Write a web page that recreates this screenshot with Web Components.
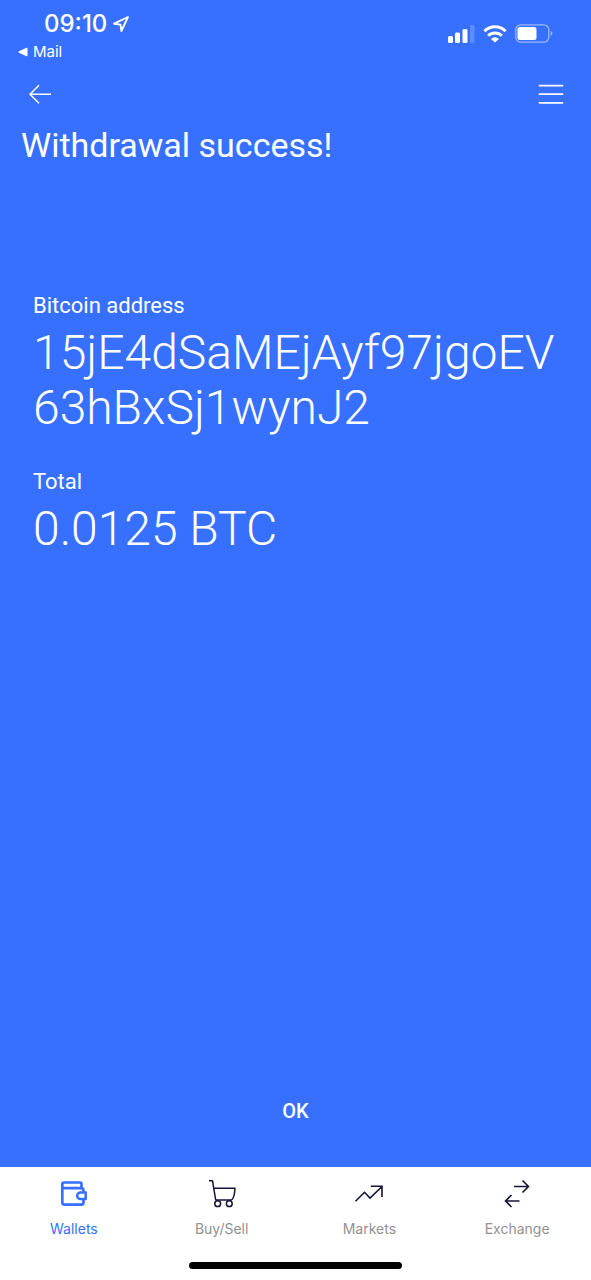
<!DOCTYPE html>
<html lang="en">
<head>
<meta charset="utf-8">
<meta name="viewport" content="width=device-width, initial-scale=1">
<title>Withdrawal success</title>
<style>
  body { margin: 0; background: #3770ff; }
</style>
</head>
<body>
<wallet-app></wallet-app>

<script>
const define = (name, html) => {
  const template = document.createElement('template');
  template.innerHTML = html;
  customElements.define(name, class extends HTMLElement {
    constructor() {
      super();
      this.attachShadow({ mode: 'open' }).append(template.content.cloneNode(true));
    }
  });
};

define('status-bar', `
<style>
  :host { display: flex; justify-content: space-between; align-items: flex-start; padding: 10px 38px 0 17px; font-family: Inter, sans-serif; color: #fff; }
  svg { display: block; }
  .time { display: flex; align-items: center; gap: 5px; padding-left: 27px; font-size: 24px; line-height: 28px; font-weight: 500; }
  .back { display: flex; align-items: center; gap: 5px; color: inherit; text-decoration: none; font-size: 15px; line-height: 20px; padding-top: 4px; }
  .signals { display: flex; align-items: center; gap: 8px; padding-top: 14px; }
</style>
<div>
  <div class="time"><span>09:10</span>
    <svg width="18" height="18" viewBox="0 0 18 18" fill="none" stroke="#fff" stroke-width="1.9" stroke-linejoin="round"><path d="M16 2 2 8.7l6.5.9.9 6.4z"/></svg>
  </div>
  <a class="back" href="#mail"><svg width="11" height="10" viewBox="0 0 11 10" fill="#fff"><path d="M2 4.200 9.500.8q1-.4 1 .7v7q0 1.100-1 .7L2 5.800q-1.600-.8 0-1.600z"/></svg>Mail</a>
</div>
<div class="signals">
  <svg width="27" height="18" viewBox="0 0 27 18" fill="#fff"><rect y="11" width="5" height="7" rx="1.500"/><rect x="7" y="7.500" width="5" height="10.500" rx="1.500"/><rect x="14.500" y="4" width="5" height="14" rx="1.500"/><rect x="22" y="0" width="4.500" height="18" rx="1.500" opacity=".2"/></svg>
  <svg width="24" height="18" viewBox="0 0 24 18" fill="none" stroke="#fff" stroke-width="3"><path d="M1.400 6.200a15 15 0 0 1 21.200 0M5.200 10.700a9.600 9.600 0 0 1 13.600 0"/><path d="M12 17.500 8 13.900a5.800 5.800 0 0 1 8 0z" fill="#fff" stroke="none"/></svg>
  <svg width="38" height="19" viewBox="0 0 38 19"><rect x=".8" y=".8" width="33" height="17.400" rx="5" fill="none" stroke="#fff" stroke-width="1.300" opacity=".5"/><rect x="2.500" y="3" width="19" height="13" rx="2.500" fill="#fff"/><path d="M35.700 7v5q1.700-.7 1.700-2.500T35.700 7" fill="#fff" opacity=".5"/></svg>
</div>`);

define('nav-header', `
<style>
  :host { display: block; padding: 16px 21px 0; color: #fff; }
  nav { display: flex; justify-content: space-between; }
  button { display: block; border: 0; padding: 4px 6px; background: none; color: inherit; }
  svg { display: block; }
  h1 { margin: 13px 0 0; font-size: 34px; line-height: 44px; font-weight: 400; }
</style>
<nav>
  <button aria-label="Back"><svg width="26" height="24" viewBox="0 0 26 24" fill="none" stroke="#fff" stroke-width="1.500"><path d="M24 12.300H3M12 3.300 3 12.300l9 9"/></svg></button>
  <button aria-label="Menu"><svg width="26" height="24" viewBox="0 0 26 24" fill="none" stroke="#fff" stroke-width="1.700" stroke-linecap="round"><path d="M1.500 3.600h23M1.500 12.200h23M1.500 20.800h23"/></svg></button>
</nav>
<h1><slot></slot></h1>`);

define('detail-item', `
<style>
  :host { display: block; color: #fff; }
  h2 { margin: 0; font-size: 22px; line-height: 28px; font-weight: 400; }
  p { margin: 5px 0 0; font-size: 48px; line-height: 55px; font-weight: 300; overflow-wrap: anywhere; }
</style>
<h2><slot name="label"></slot></h2>
<p><slot></slot></p>`);

define('confirm-button', `
<style>
  :host { display: block; text-align: center; }
  button { border: 0; padding: 12px 32px; background: none; color: #fff; font: 500 20px/24px Roboto, sans-serif; }
</style>
<button><slot></slot></button>`);

define('tab-item', `
<style>
  :host { display: block; flex: 1 1 0; min-width: 0; color: #929292; }
  :host([active]) { color: #3770ff; }
  a { display: flex; flex-direction: column; align-items: center; gap: 10px; color: inherit; text-decoration: none; font: 400 14px/20px Inter, sans-serif; }
</style>
<a href="#"><slot name="icon"></slot><span><slot></slot></span></a>`);

define('tab-bar', `
<style>
  :host { display: block; background: #fff; padding: 12px 0 11px; }
  nav { display: flex; }
  svg { display: block; }
  .home { width: 36%; height: 7px; margin: 23px auto 0; border-radius: 4px; background: #000; }
</style>
<nav>
  <tab-item active><svg slot="icon" width="30" height="30" viewBox="0 0 30 30" fill="none" stroke="#3770ff" stroke-width="2.700" stroke-linejoin="round"><path d="M22.500 8.700V5q0-1.500-1.500-1.500H5q-1.700 0-1.700 1.700v18q0 2.500 2.500 2.500H22q2.500 0 2.500-2.500V20M3.300 9.200H22q2.500 0 2.500 2.500V13"/><path d="M26.700 13.500H21.500a3.300 3.300 0 0 0 0 6.600H26.700z" stroke-width="2.500"/></svg>Wallets</tab-item>
  <tab-item><svg slot="icon" width="30" height="30" viewBox="0 0 30 30" fill="none" stroke="#14143a" stroke-width="1.500" stroke-linejoin="round"><path d="M2 1.700H5.500L8.700 21H24.500Q27.500 19 28 9.300H6.700"/><circle cx="10.700" cy="24.700" r="2.900"/><circle cx="22.300" cy="24.700" r="2.900"/></svg>Buy/Sell</tab-item>
  <tab-item><svg slot="icon" width="30" height="30" viewBox="0 0 30 30" fill="none" stroke="#14143a" stroke-width="1.600"><path d="M1.500 22.200 10.500 13.300 16 19 28 7.500M16.800 7.300H28V18"/></svg>Markets</tab-item>
  <tab-item><svg slot="icon" width="30" height="30" viewBox="0 0 30 30" fill="none" stroke="#14143a" stroke-width="1.600"><path d="M12 7.500H26.500M20.500 1.500l6 6-6 6M17.500 22H3.500M9.500 16l-6 6 6 6"/></svg>Exchange</tab-item>
</nav>
<div class="home"></div>`);

define('wallet-app', `
<style>
  :host { display: flex; flex-direction: column; min-height: 100vh; font-family: Roboto, sans-serif; background: #3770ff; }
  main { flex: 1; display: flex; flex-direction: column; gap: 33px; padding: 125px 33px 24px; }
  confirm-button { padding-bottom: 32px; }
</style>
<status-bar></status-bar>
<nav-header>Withdrawal success!</nav-header>
<main>
  <detail-item><span slot="label">Bitcoin address</span>15jE4dSaMEjAyf97jgoEV63hBxSj1wynJ2</detail-item>
  <detail-item><span slot="label">Total</span>0.0125 BTC</detail-item>
</main>
<confirm-button>OK</confirm-button>
<tab-bar></tab-bar>`);
</script>
</body>
</html>
